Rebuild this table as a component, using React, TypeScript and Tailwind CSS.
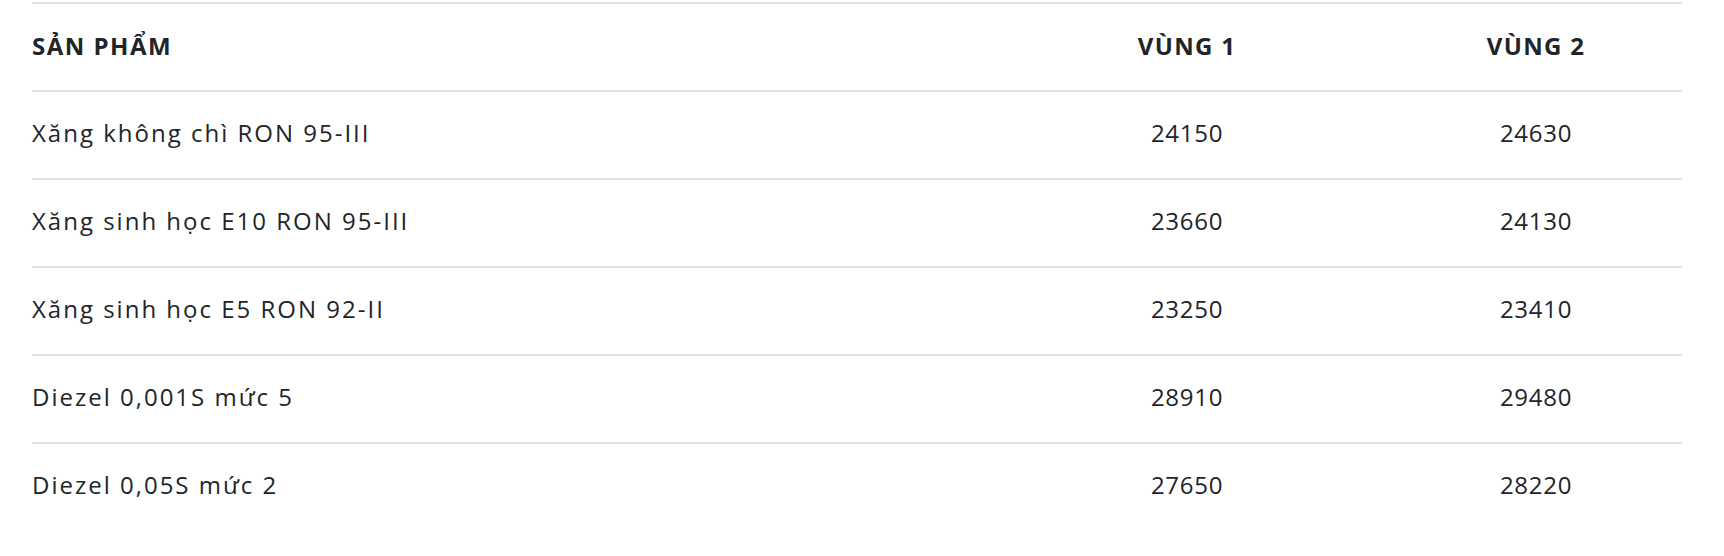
const rows = [
	{ name: 'Xăng không chì RON 95-III', v1: '24150', v2: '24630' },
	{ name: 'Xăng sinh học E10 RON 95-III', v1: '23660', v2: '24130' },
	{ name: 'Xăng sinh học E5 RON 92-II', v1: '23250', v2: '23410' },
	{ name: 'Diezel 0,001S mức 5', v1: '28910', v2: '29480' },
	{ name: 'Diezel 0,05S mức 2', v1: '27650', v2: '28220' },
]

export default function App() {
	return (
		<div className="w-[1724px] h-[556px] bg-white pt-[2px] pl-8 text-[#212529] font-['Open_Sans',sans-serif]">
			<div className="w-[1650px]">
				<div className="grid grid-cols-[952px_406px_292px] h-[88px] pb-[2px] items-center border-t-2 border-[#dfe2e6] text-[24px] font-bold">
					<div className="tracking-[1.5px]">SẢN PHẨM</div>
					<div className="text-center tracking-[1.3px]">VÙNG 1</div>
					<div className="text-center tracking-[1.3px]">VÙNG 2</div>
				</div>
				{
					rows.map((row, index) => (
						<div key={index} className="grid grid-cols-[952px_406px_292px] h-[88px] pb-[4px] items-center border-t-2 border-[#dfe2e6] text-[24px]">
							<div className="tracking-[2px]">{ row.name }</div>
							<div className="text-center tracking-[0.7px]">{ row.v1 }</div>
							<div className="text-center tracking-[0.7px]">{ row.v2 }</div>
						</div>
					))
				}
			</div>
		</div>
	)
}
